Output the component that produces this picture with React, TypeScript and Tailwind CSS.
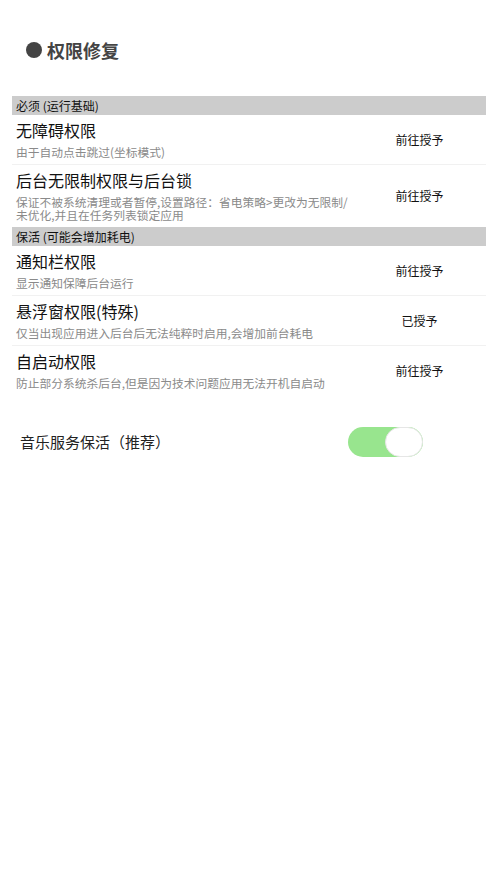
import React from "react";

const font = { fontFamily: '"Noto Sans CJK SC", "Noto Sans", sans-serif' };

function Header({ text }: { text: string }) {
  return (
    <div className="h-[19px] bg-[#cccccc] pl-1 text-[12px] leading-[19px] text-[#111]">
      {text}
    </div>
  );
}

function Row({
  title,
  sub,
  action,
  divider = true,
}: {
  title: string;
  sub: string;
  action: string;
  divider?: boolean;
}) {
  return (
    <div className={`flex items-center ${divider ? "border-b border-[#f1f1f1]" : ""}`}>
      <div className="w-[345px] shrink-0 pl-1 pt-[3px] pb-[6px]">
        <div className="text-[16px] leading-[24px] text-[#111]">{title}</div>
        <div className="mt-[3px] text-[11.75px] leading-[13px] text-[#8a8a8a]">{sub}</div>
      </div>
      <div className="flex-1 pr-1 text-center text-[12px] text-[#111]">{action}</div>
    </div>
  );
}

export default function App() {
  return (
    <div className="min-h-[887px] w-[498px] bg-white" style={font}>
      <div className="flex items-center pt-[36px] pl-[26px]">
        <div className="h-[16px] w-[16px] rounded-full bg-[#444]" />
        <div className="ml-[5px] text-[18px] font-bold leading-[28px] text-[#444]">权限修复</div>
      </div>
      <div className="mx-3 mt-[32px]">
        <Header text="必须 (运行基础)" />
        <Row title="无障碍权限" sub="由于自动点击跳过(坐标模式)" action="前往授予" />
        <Row
          title="后台无限制权限与后台锁"
          sub="保证不被系统清理或者暂停,设置路径：省电策略>更改为无限制/未优化,并且在任务列表锁定应用"
          action="前往授予"
          divider={false}
        />
        <Header text="保活 (可能会增加耗电)" />
        <Row title="通知栏权限" sub="显示通知保障后台运行" action="前往授予" />
        <Row title="悬浮窗权限(特殊)" sub="仅当出现应用进入后台后无法纯粹时启用,会增加前台耗电" action="已授予" />
        <Row
          title="自启动权限"
          sub="防止部分系统杀后台,但是因为技术问题应用无法开机自启动"
          action="前往授予"
          divider={false}
        />
      </div>
      <div className="mt-[32px] flex items-center pl-5 pr-[75px]">
        <div className="flex-1 text-[15px] leading-[24px] text-[#222]">音乐服务保活（推荐）</div>
        <div className="flex h-[30px] w-[75px] items-center justify-end rounded-full bg-[#98e58e]">
          <div className="h-[30px] w-[38px] rounded-full border border-[#e6e6e6] bg-white" />
        </div>
      </div>
    </div>
  );
}
